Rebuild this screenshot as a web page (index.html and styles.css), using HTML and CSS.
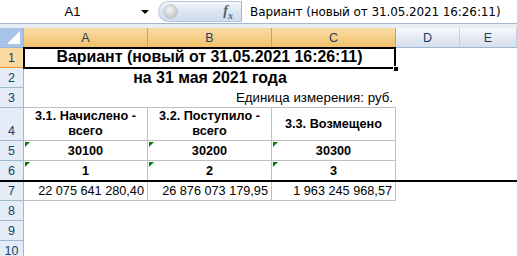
FILE: index.html
```html
<!DOCTYPE html>
<html lang="ru">
<head>
    <meta charset="UTF-8">
    <title>Вариант</title>
    <link rel="stylesheet" href="styles.css">
</head>
<body>
    <div class="formula-bar">
        <div class="name-box">
            <span class="ref">A1</span>
            <span class="arrow"></span>
        </div>
        <div class="fx-pill">
            <span class="knob"></span>
            <span class="fx">f<sub>x</sub></span>
        </div>
        <div class="formula">Вариант (новый от 31.05.2021 16:26:11)</div>
    </div>
    <div class="gap"></div>

    <div class="sheet">
        <div class="corner"><span class="tri"></span></div>
        <div class="ch sel">A</div>
        <div class="ch sel">B</div>
        <div class="ch sel">C</div>
        <div class="ch">D</div>
        <div class="ch">E</div>

        <div class="rh sel">1</div>
        <div class="cell merged title active">Вариант (новый от 31.05.2021 16:26:11)<span class="handle"></span></div>
        <div class="cell"></div>
        <div class="cell"></div>

        <div class="rh">2</div>
        <div class="cell merged title">на 31 мая 2021 года</div>
        <div class="cell"></div>
        <div class="cell"></div>

        <div class="rh">3</div>
        <div class="cell merged unit">Единица измерения: руб.</div>
        <div class="cell"></div>
        <div class="cell"></div>

        <div class="rh tall">4</div>
        <div class="cell t head">3.1. Начислено - всего</div>
        <div class="cell t head">3.2. Поступило - всего</div>
        <div class="cell t head">3.3. Возмещено</div>
        <div class="cell"></div>
        <div class="cell"></div>

        <div class="rh">5</div>
        <div class="cell t code flag">30100</div>
        <div class="cell t code flag">30200</div>
        <div class="cell t code flag">30300</div>
        <div class="cell"></div>
        <div class="cell"></div>

        <div class="rh">6</div>
        <div class="cell t code flag">1</div>
        <div class="cell t code flag">2</div>
        <div class="cell t code flag">3</div>
        <div class="cell"></div>
        <div class="cell"></div>

        <div class="rh">7</div>
        <div class="cell t num">22 075 641 280,40</div>
        <div class="cell t num">26 876 073 179,95</div>
        <div class="cell t num">1 963 245 968,57</div>
        <div class="cell"></div>
        <div class="cell"></div>

        <div class="rh">8</div>
        <div class="cell"></div><div class="cell"></div><div class="cell"></div><div class="cell"></div><div class="cell"></div>
        <div class="rh">9</div>
        <div class="cell"></div><div class="cell"></div><div class="cell"></div><div class="cell"></div><div class="cell"></div>
        <div class="rh">10</div>
        <div class="cell"></div><div class="cell"></div><div class="cell"></div><div class="cell"></div><div class="cell"></div>

        <div class="line"></div>
    </div>
</body>
</html>
```

FILE: styles.css
```css
* {
    box-sizing: border-box;
}
body {
    margin: 0;
    width: 517px;
    height: 256px;
    overflow: hidden;
    background: #ffffff;
    font-family: "Liberation Sans", Arial, sans-serif;
    color: #000;
}

/* formula bar */
.formula-bar {
    display: flex;
    height: 24px;
    background: #ffffff;
    border-bottom: 1px solid #a5b6cc;
}
.name-box {
    width: 158px;
    display: flex;
    align-items: center;
    position: relative;
}
.name-box .ref {
    flex: 1;
    text-align: center;
    font-size: 13px;
    padding-left: 4px;
}
.name-box .arrow {
    width: 0;
    height: 0;
    margin-right: 9px;
    border-left: 4px solid transparent;
    border-right: 4px solid transparent;
    border-top: 4px solid #000;
}
.fx-pill {
    width: 84px;
    margin: 1px 0 1px 0;
    display: flex;
    align-items: center;
    justify-content: space-between;
    padding: 0 8px 0 4px;
    border-radius: 11px 0 0 11px;
    border: 1px solid #b6c6dc;
    border-right: 1px solid #a7b8ce;
    background: linear-gradient(#f7f9fc, #dbe5f3 50%, #cfdcef);
}
.knob {
    width: 15px;
    height: 15px;
    border-radius: 50%;
    background: radial-gradient(circle at 45% 40%, #f4f4f4, #c6c9ce 60%, #aeb4bc);
}
.fx {
    font-family: "Liberation Serif", serif;
    font-style: italic;
    font-size: 14px;
    color: #555e6a;
    font-weight: bold;
}
.fx sub {
    font-size: 10px;
}
.formula {
    flex: 1;
    display: flex;
    align-items: center;
    padding-left: 8px;
    font-family: "DejaVu Sans", sans-serif;
    font-size: 12px;
    letter-spacing: -0.1px;
}
.gap {
    height: 4px;
    background: #e9eef5;
}

/* sheet grid */
.sheet {
    position: relative;
    display: grid;
    grid-template-columns: 24px 124px 124px 124px 64px 1fr;
    grid-template-rows: 20px 20px 20px 20px 33px 20px 20px 20px 20px 20px 20px;
}
.corner {
    position: relative;
    background: #a9c4e9;
    border-right: 1px solid #9eb6ce;
    border-bottom: 1px solid #9eb6ce;
}
.corner .tri {
    position: absolute;
    right: 3px;
    bottom: 3px;
    width: 0;
    height: 0;
    border-left: 13px solid transparent;
    border-bottom: 13px solid #ffffff;
}
.ch {
    display: flex;
    align-items: center;
    justify-content: center;
    font-size: 12.5px;
    color: #213d5e;
    background: linear-gradient(#f8fafd, #e4eaf3 50%, #d6dfec);
    border-right: 1px solid #c1cee0;
    border-bottom: 1px solid #9eb6ce;
}
.ch.sel {
    background: linear-gradient(#f9dca6, #f5cf89 50%, #f0c169);
    border-right: 1px solid #f29536;
    border-bottom: 1px solid #f29536;
}
.rh {
    display: flex;
    align-items: center;
    justify-content: center;
    font-size: 12.5px;
    color: #213d5e;
    background: #e4ecf7;
    border-right: 1px solid #9eb6ce;
    border-bottom: 1px solid #9eb6ce;
}
.rh.sel {
    background: #f9d99f;
    border-right: 1px solid #f29536;
    border-bottom: 1px solid #f29536;
}
.rh.tall {
    align-items: flex-end;
    padding-bottom: 2px;
}

.cell {
    position: relative;
    font-size: 12.7px;
}
.merged {
    grid-column: span 3;
    display: flex;
    align-items: flex-end;
    justify-content: center;
}
.title {
    font-size: 15.9px;
    font-weight: bold;
    padding-bottom: 1px;
}
.unit {
    font-size: 13.3px;
    justify-content: flex-end;
    padding-right: 3px;
    padding-bottom: 2px;
    border-bottom: 1px solid #c0c0c0;
}
.active {
    border: 2px solid #000;
    margin: -1px 0 -1px -1px;
}
.handle {
    position: absolute;
    right: -5px;
    bottom: -5px;
    width: 6px;
    height: 6px;
    background: #000;
    border: 1px solid #fff;
}

.t {
    border-right: 1px solid #c0c0c0;
    border-bottom: 1px solid #c0c0c0;
    display: flex;
    align-items: center;
    justify-content: center;
    text-align: center;
}
.head {
    font-weight: bold;
    line-height: 15px;
    padding: 0 4px;
}
.code {
    font-weight: bold;
    padding-top: 1px;
}
.flag::before {
    content: "";
    position: absolute;
    left: 1px;
    top: 1px;
    width: 0;
    height: 0;
    border-right: 5px solid transparent;
    border-top: 5px solid #008000;
}
.num {
    justify-content: flex-end;
    padding-right: 3px;
    padding-top: 1px;
}
.line {
    position: absolute;
    left: 0;
    right: 0;
    top: 152px;
    height: 2px;
    background: #000;
}
```
